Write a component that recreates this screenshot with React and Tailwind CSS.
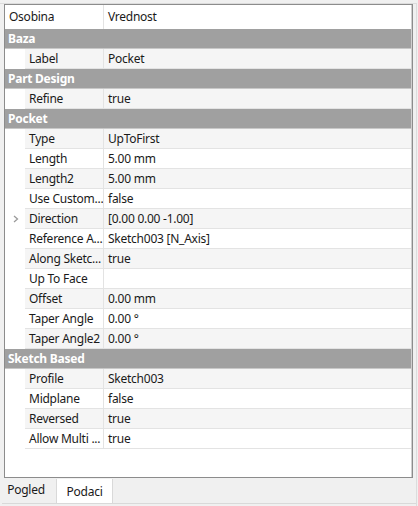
import React from 'react';

const GROUPS = [
  { name: 'Baza', rows: [['Label', 'Pocket']] },
  { name: 'Part Design', rows: [['Refine', 'true']] },
  {
    name: 'Pocket',
    rows: [
      ['Type', 'UpToFirst'],
      ['Length', '5.00 mm'],
      ['Length2', '5.00 mm'],
      ['Use Custom...', 'false'],
      ['Direction', '[0.00 0.00 -1.00]', true],
      ['Reference A...', 'Sketch003 [N_Axis]'],
      ['Along Sketc...', 'true'],
      ['Up To Face', ''],
      ['Offset', '0.00 mm'],
      ['Taper Angle', '0.00 °'],
      ['Taper Angle2', '0.00 °'],
    ],
  },
  {
    name: 'Sketch Based',
    rows: [
      ['Profile', 'Sketch003'],
      ['Midplane', 'false'],
      ['Reversed', 'true'],
      ['Allow Multi ...', 'true'],
    ],
  },
];

function Row({ label, value, expandable, shade }) {
  return (
    <div className="flex h-[20px]">
      <div className="w-[20px] bg-white flex items-center justify-center">
        {expandable && (
          <svg width="8" height="8" viewBox="0 0 8 8" className="ml-[2px]">
            <path d="M2 1 L5.5 4 L2 7" fill="none" stroke="#9a9a9a" strokeWidth="1.3" />
          </svg>
        )}
      </div>
      <div className={`flex flex-1 border-b border-[#e3e3e3] ${shade ? 'bg-[#f5f5f5]' : 'bg-white'}`}>
        <div className="w-[79px] pl-[4px] border-r border-[#e3e3e3] leading-[19px] whitespace-nowrap overflow-hidden">{label}</div>
        <div className="flex-1 pl-[4px] leading-[19px] whitespace-nowrap">{value}</div>
      </div>
    </div>
  );
}

export default function App() {
  return (
    <div
      className="w-[418px] h-[506px] bg-[#f0f0f0] text-[12px] text-[#1a1a1a] tracking-[-0.25px] overflow-hidden"
      style={{ fontFamily: '"Noto Sans", "Open Sans", sans-serif' }}
    >
      <div className="h-[506px] border-t border-r border-[#dcdcdc] mr-[1px] mt-[3px] flex flex-col">
        {/* PROPERTY FRAME */}
        <div className="ml-[4px] mr-[3px] h-[474px] border border-[#8c8c8c] bg-white">
          <div className="h-full border-r border-[#cfcfcf] flex flex-col">
            <div className="flex h-[24px] bg-white">
              <div className="w-[99px] pl-[4px] leading-[24px] border-r border-[#e3e3e3]">Osobina</div>
              <div className="flex-1 pl-[4px] leading-[24px]">Vrednost</div>
            </div>
            {GROUPS.map(g => (
              <div key={g.name}>
                <div className="h-[20px] bg-[#a0a0a0] text-white font-bold pl-[3px] leading-[20px] border-b border-[#c8c8c8]">
                  {g.name}
                </div>
                {g.rows.map((r, i) => (
                  <Row key={r[0]} label={r[0]} value={r[1]} expandable={r[2]} shade={i % 2 === 0} />
                ))}
              </div>
            ))}
          </div>
        </div>

        {/* TABS */}
        <div className="flex mt-[1px] ml-[2px] h-[25px] border-b border-[#d9d9d9] items-start">
          <div className="w-[48px] h-[22px] bg-[#f0f0f0] text-center leading-[20px] mt-[1px]">Pogled</div>
          <div className="ml-[6px] w-[57px] h-[25px] bg-white border-l border-r border-b border-[#d9d9d9] text-center leading-[26px] -mb-[1px]">Podaci</div>
        </div>
      </div>
    </div>
  );
}
